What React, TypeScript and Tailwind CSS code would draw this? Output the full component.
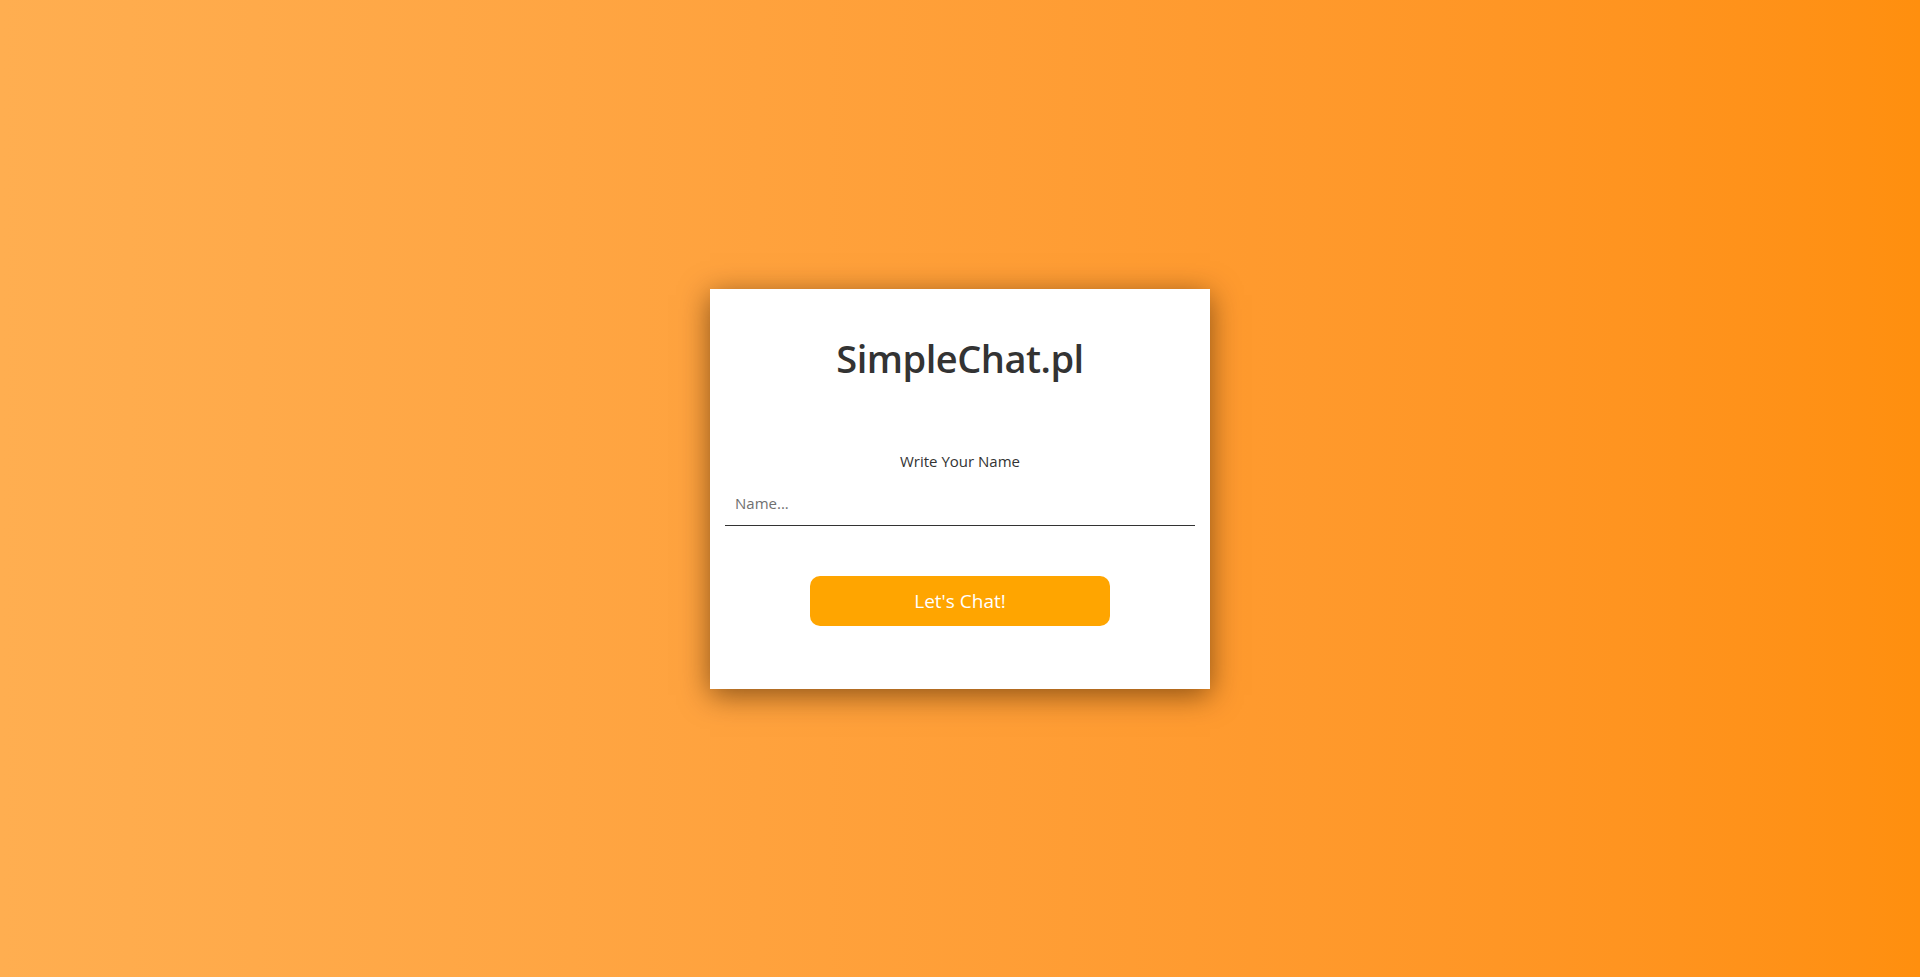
export default function App() {
  return (
    <div className="flex min-h-[977px] w-full items-center justify-center bg-gradient-to-r from-[#ffae50] to-[#ff8f0e] font-['Open_Sans',sans-serif] text-[#333]">
      <div className="flex h-[400px] w-[500px] flex-col items-center bg-white px-[15px] shadow-[0_6px_28px_rgba(60,30,0,0.6)]">
        <h1 className="mt-[45px] text-[38px] font-semibold leading-[48px] tracking-[-0.5px] text-[#333]">
          SimpleChat.pl
        </h1>
        <label
          htmlFor="name"
          className="mt-[67px] text-[15px] leading-[24px] text-[#333]"
        >
          Write Your Name
        </label>
        <input
          id="name"
          placeholder="Name..."
          className="mt-[13px] h-[40px] w-full border-b border-[#333] px-[10px] pb-[4px] text-[15px] outline-none placeholder:text-[#707070]"
        />
        <button className="mt-[50px] h-[50px] w-[300px] rounded-[10px] bg-[#ffa500] pt-[2px] text-[19px] text-white">
          Let's Chat!
        </button>
      </div>
    </div>
  );
}
